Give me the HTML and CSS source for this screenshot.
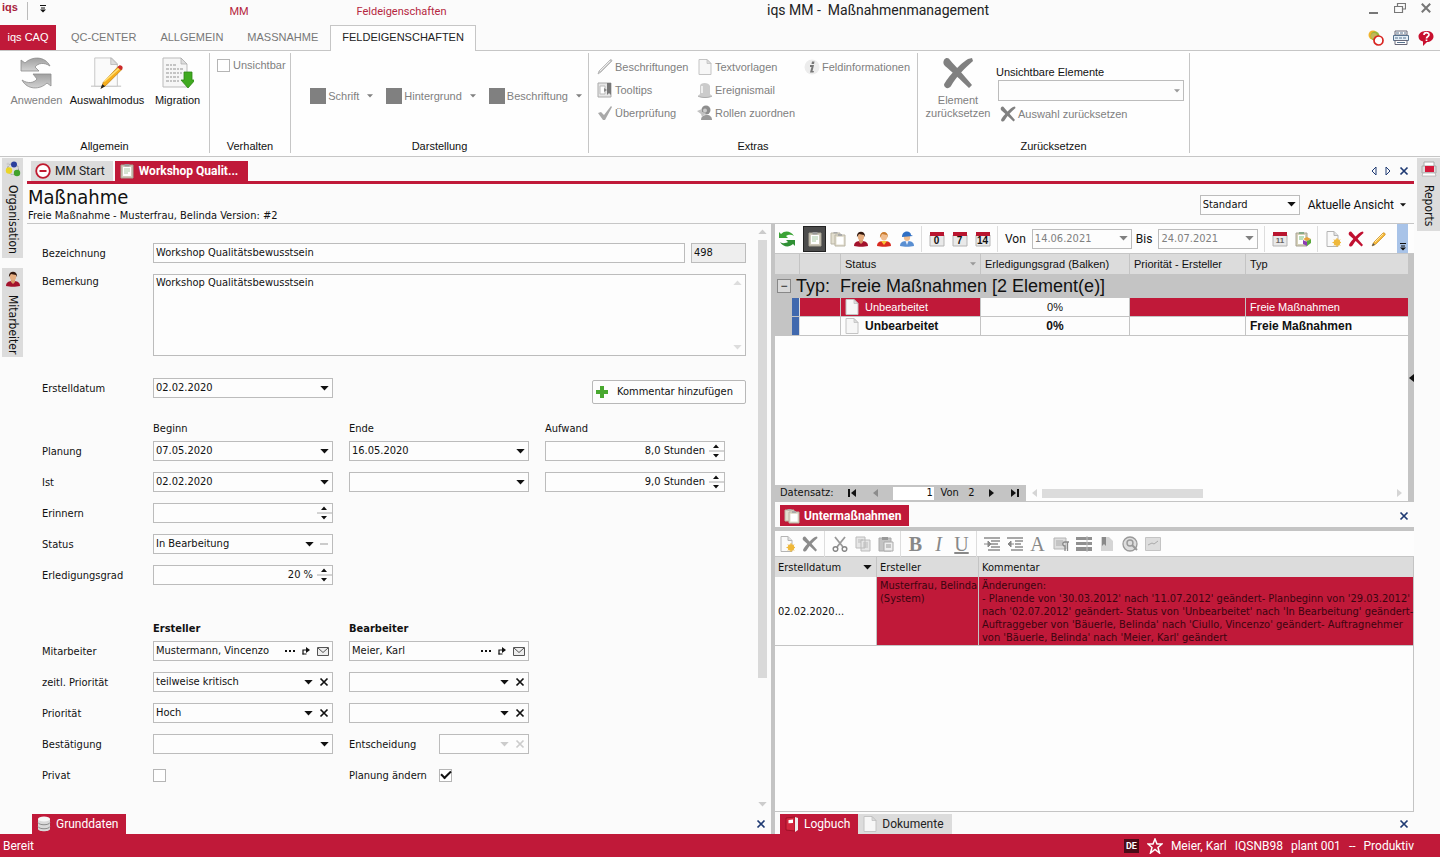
FILE: index.html
```html
<!DOCTYPE html>
<html lang="de">
<head>
<meta charset="utf-8">
<title>iqs MM - Maßnahmenmanagement</title>
<link rel="stylesheet" href="styles.css">
</head>
<body>
<svg class="defs" aria-hidden="true">
  <symbol id="caret" viewBox="0 0 10 6"><path d="M0 0h10L5 5.5z" fill="currentColor"/></symbol>
  <symbol id="caret-left" viewBox="0 0 6 10"><path d="M6 1v8L1 5z" fill="currentColor"/></symbol>
  <symbol id="caret-right" viewBox="0 0 6 10"><path d="M0 1v8l5-4z" fill="currentColor"/></symbol>
  <symbol id="first" viewBox="0 0 9 8"><path d="M0 0h2v8H0zM8 0v8L3 4z" fill="currentColor"/></symbol>
  <symbol id="last" viewBox="0 0 9 8"><path d="M7 0h2v8H7zM1 0v8l5-4z" fill="currentColor"/></symbol>
  <symbol id="more" viewBox="0 0 8 10"><path d="M1 2.500h6M2 5h4" stroke="currentColor"/><path d="M1 6.500h6L4 9.500z" fill="currentColor"/></symbol>
  <symbol id="x" viewBox="0 0 10 10"><path d="M1.500 1.500l7 7M8.500 1.500l-7 7" stroke="currentColor" stroke-width="1.700"/></symbol>
  <symbol id="spin" viewBox="0 0 16 18"><path d="M5 6h6L8 2.500zM5 12h6l-3 3.500z" fill="#111"/><path d="M1 9h15" stroke="#aaa"/></symbol>
  <symbol id="go" viewBox="0 0 10 10"><path d="M2 8.500V4h4" fill="none" stroke="#111" stroke-width="1.200"/><path d="M5 1l4 3-4 3z" fill="#111"/><path d="M1.500 8h4" stroke="#111"/></symbol>
  <symbol id="mail" viewBox="0 0 12 10"><path d="M.5 1.500h11v8H.5z" fill="#eee" stroke="#555"/><path d="M1 2l5 4.500L11 2" fill="none" stroke="#555"/></symbol>
  <symbol id="bigx" viewBox="0 0 32 32"><path d="M2 3c2-3 5-2 6 0 6 7 13 14 22 25l-3 3C19 23 9 14 3 9 1 7 1 5 2 3z" fill="currentColor"/><path d="M30 1l1 3C22 12 14 20 9 29c-2 3-6 3-7-1C3 24 16 8 26 2z" fill="currentColor"/></symbol>
  <symbol id="cycle" viewBox="0 0 32 32"><defs><linearGradient id="cg" x2="0" y2="1"><stop stop-color="#a0a0a0"/><stop offset="1" stop-color="#d2d2d2"/></linearGradient></defs><path d="M1 3l4 3C12-1 25-1 30 9c-6-4-12-3-15 1l4 4H1z" fill="url(#cg)" stroke="#8d8d8d" stroke-width=".8"/><path d="M31 29l-4-3C20 33 7 33 2 23c6 4 12 3 15-1l-4-5h18z" fill="url(#cg)" stroke="#8d8d8d" stroke-width=".8"/></symbol>
  <symbol id="doc" viewBox="0 0 14 16"><path d="M1 .5h8l4 4v11H1z" fill="#f7f7f7" stroke="#c4c4c4"/><path d="M9 .5v4h4z" fill="#ddd" stroke="#bcbcbc" stroke-width=".7"/></symbol>
  <symbol id="edit-doc" viewBox="0 0 34 34"><path d="M0 31h32" stroke="#bbb"/><path d="M4 1h18l6 6v24H4z" fill="#fafafa" stroke="#c4c4c4"/><path d="M21 1v7h7z" fill="#ddd" stroke="#aaa" stroke-width=".7"/><path d="M11 33l2-6L29 10l4 3-17 17z" fill="#f7ae1c" stroke="#b97909" stroke-width=".7"/><path d="M14 26l17-15" stroke="#ffe078" stroke-width="1.500"/><path d="M28 11l2-2c2-1 5 2 3 4l-1 1z" fill="#cc2a2a"/><path d="M10 34l2-5 3 2z" fill="#222"/></symbol>
  <symbol id="migrate" viewBox="0 0 32 32"><path d="M1 1h18l6 6v23H1z" fill="#f6f6f6" stroke="#bbb"/><path d="M19 1v6h6z" fill="#ddd" stroke="#aaa" stroke-width=".7"/><path d="M4 8h11M4 12h18M4 16h16M4 20h14M4 24h14" stroke="#b4b4b4" stroke-width="1.500" stroke-dasharray="3 1 2 1"/><path d="M22 15h8v8h3l-7 8-7-8h3z" fill="#3faa20" stroke="#2d8515" stroke-width=".8"/></symbol>
  <symbol id="pencil" viewBox="0 0 16 16"><path d="M1 15l2-4L12 2c1-1 3 1 2 2l-9 9z" fill="#f6b93a" stroke="#c98c1e" stroke-width=".7"/><path d="M4 11l8-8" stroke="#ffe9a5"/><path d="M1 15l1-3 2 2z" fill="#555"/></symbol>
  <symbol id="pencil-g" viewBox="0 0 16 16"><path d="M1 15l1-3L13 1c1-1 2 0 2 1L4 13z" fill="#c6c6c6" stroke="#aaa" stroke-width=".7"/><path d="M3 12L13 2" stroke="#eee"/></symbol>
  <symbol id="tip" viewBox="0 0 16 16"><path d="M1 1h13v14H1z" fill="#e6e6e6" stroke="#aaa"/><path d="M3 4h5v8H3z" fill="#fff" stroke="#bbb"/><path d="M10 1h4v12l-2-2-2 2z" fill="#777"/><path d="M7 6l3 2-3 2z" fill="#888"/></symbol>
  <symbol id="check-g" viewBox="0 0 16 16"><path d="M1 8l3-1 3 3 7-9 1 1-7 13H6z" fill="#a9a9a9"/></symbol>
  <symbol id="bell" viewBox="0 0 16 16"><path d="M3 12V4c0-4 9-4 10 0v8l2 2c-3 2-11 2-14 0z" fill="#cbcbcb"/><path d="M5 4v7" stroke="#eee" stroke-width="2"/><path d="M1 14c3 2 11 2 14 0" fill="none" stroke="#aaa"/></symbol>
  <symbol id="role" viewBox="0 0 16 16"><circle cx="9" cy="5" r="4.500" fill="#8d8d8d"/><path d="M4 15c0-4 3-5 6-5s5 2 5 5z" fill="#999"/><path d="M0 6l5-2v3l4 1-4 4-1-3z" fill="#c2c2c2"/><circle cx="8" cy="5.500" r="2" fill="#ccc"/></symbol>
  <symbol id="info" viewBox="0 0 16 16"><circle cx="8" cy="8" r="7.500" fill="#ececec"/><path d="M8 2.500h2.500L10 5H7.500zM6 6h4l-1.500 6H10l-.5 1.500H6L7.500 8H6z" fill="#777"/></symbol>
  <symbol id="circles" viewBox="0 0 16 16"><circle cx="5" cy="5" r="4.500" fill="#f0b32c"/><circle cx="7" cy="6" r="4.500" fill="#97b73c"/><circle cx="6" cy="6" r="3" fill="#c5b65a"/><circle cx="10.500" cy="10.500" r="4.500" fill="#fff" stroke="#d8231f" stroke-width="1.700"/></symbol>
  <symbol id="printer" viewBox="0 0 16 16"><path d="M2 1h12v4H2z" fill="#fff" stroke="#667"/><path d="M.5 5.500h15v5H.5z" fill="#e4eef6" stroke="#56728f"/><path d="M3 3h10M2 8h12" stroke="#56728f" stroke-dasharray="3 1"/><path d="M2 10.500h12v4H2z" fill="#fff" stroke="#667"/><path d="M4 12.500h8" stroke="#56728f"/></symbol>
  <symbol id="help" viewBox="0 0 16 16"><path d="M8 1c5 0 7.500 2 7.500 5.500S12 12 9 12l-4 4 0-4.500C2 11 .5 9 .5 6.500S3 1 8 1z" fill="#c8102e"/><path d="M6 5c0-3 5-3 5-.3C11 6.500 8.500 6.500 8.500 8.500M8.500 9.500v1.500" fill="none" stroke="#fff" stroke-width="1.700"/></symbol>
  <symbol id="orga" viewBox="0 0 16 16"><circle cx="8" cy="8" r="5.500" fill="none" stroke="#999" stroke-dasharray="2 1"/><circle cx="9" cy="3.500" r="3" fill="#2b3f9d"/><circle cx="4" cy="9.500" r="3.200" fill="#ead526"/><circle cx="12" cy="12" r="3.200" fill="#41a12c"/><circle cx="3" cy="3" r="1.500" fill="#ccc"/></symbol>
  <symbol id="person" viewBox="0 0 16 16"><path d="M1 15c0-4 3-5 7-5s7 1 7 5c-4 1-10 1-14 0z" fill="#a3122c"/><path d="M6 8h4v3l-2 2-2-2z" fill="#d99a6a"/><ellipse cx="8" cy="5.500" rx="3.200" ry="4" fill="#e5ad80"/><path d="M4 6c-1-7 9-7 8 0l-1-2-5-1z" fill="#33190f"/></symbol>
  <symbol id="person2" viewBox="0 0 16 16"><path d="M1 15c0-4 3-5 7-5s7 1 7 5c-4 1-10 1-14 0z" fill="#d92a20"/><path d="M5 10h6l-3 4z" fill="#f5c339"/><ellipse cx="8" cy="5.500" rx="3.200" ry="4" fill="#f0bd8f"/><path d="M4 7c-1-8 9-8 8 0l-1-3-5-1z" fill="#c97b2d"/></symbol>
  <symbol id="person3" viewBox="0 0 16 16"><path d="M1 15c0-4 3-5 7-5s7 1 7 5c-4 1-10 1-14 0z" fill="#5a8fd2"/><path d="M6 9h4l-2 5z" fill="#e8eefa"/><ellipse cx="8" cy="6" rx="3.200" ry="4" fill="#f0bd8f"/><path d="M3 6C3-1 12-1 12 4l2 1z" fill="#2f6fc4"/></symbol>
  <symbol id="report" viewBox="0 0 16 16"><path d="M3 1h10v5H3z" fill="#fff" stroke="#aaa"/><path d="M1 5h14v7H1z" fill="#ddd" stroke="#aaa"/><path d="M4 5h9v6H4z" fill="#d4183a"/><path d="M2 12h12l1 3H1z" fill="#fff" stroke="#aaa" stroke-width=".7"/></symbol>
  <symbol id="mm" viewBox="0 0 16 16"><circle cx="8" cy="8" r="6.800" fill="#fff" stroke="#c01a2f" stroke-width="1.800"/><path d="M4.500 8h7" stroke="#c01a2f" stroke-width="2"/></symbol>
  <symbol id="clip" viewBox="0 0 14 16"><path d="M1 2h12v13H1z" fill="#cfcabb" stroke="#a8a394"/><path d="M3 4h8v9H3z" fill="#fff"/><path d="M4.500 1h5v2.500h-5z" fill="#999"/><path d="M4 6h6M4 8h6M4 10h4" stroke="#a9c9a4"/></symbol>
  <symbol id="clips" viewBox="0 0 16 16"><path d="M1 2h9v11H1z" fill="#e2decf" stroke="#bab5a4"/><path d="M5 4h10v11H5z" fill="#e2decf" stroke="#bab5a4"/><path d="M6.500 6h7v7.500h-7z" fill="#fff"/><path d="M3.500 1h4v1.500h-4zM8 3h4v2H8z" fill="#aaa"/></symbol>
  <symbol id="clip-c" viewBox="0 0 16 16"><path d="M1 2h11v13H1z" fill="#d6d1b8" stroke="#a8a394"/><path d="M3 4h7v9H3z" fill="#fff"/><path d="M4 1h5v2H4z" fill="#8a8"/><path d="M4 6h5M4 8h4" stroke="#7b7"/><path d="M8 8l4-2 4 2-4 2z" fill="#e8a23a"/><path d="M8 9l4 2v4l-4-2z" fill="#8c3bb4"/><path d="M12 10l4-2v4l-4 3z" fill="#5aa83c"/></symbol>
  <symbol id="refresh" viewBox="0 0 16 16"><path d="M0 1l2 2c4-4 10-3 13 2-3-2-6-1-8 0l2 2H0z" fill="#3ba336"/><path d="M16 15l-2-2C10 17 4 16 1 11c3 2 6 1 8 0L7 9h9z" fill="#2f8f34"/></symbol>
  <symbol id="cal" viewBox="0 0 16 16"><path d="M1 4h14v11H1z" fill="#e9e9e9" stroke="#b5b5b5"/><path d="M1 1h14v4H1z" fill="#b9152f"/></symbol>
  <symbol id="newdoc" viewBox="0 0 16 16"><path d="M2 .5h7l4 4v11H2z" fill="#fafafa" stroke="#b4b4b4"/><path d="M9 .5v4h4" fill="#e2e2e2" stroke="#b4b4b4"/><circle cx="12" cy="11.500" r="3.300" fill="#efb83a"/><path d="M12 7v9M7.500 11.500h9M9 8.500l6 6M15 8.500l-6 6" stroke="#efb83a"/></symbol>
  <symbol id="cut" viewBox="0 0 16 16"><path d="M3 1l8 10M13 1L5 11" stroke="#999" stroke-width="1.800"/><circle cx="3.500" cy="13" r="2.300" fill="none" stroke="#888" stroke-width="1.500"/><circle cx="12.500" cy="13" r="2.300" fill="none" stroke="#888" stroke-width="1.500"/></symbol>
  <symbol id="copy" viewBox="0 0 16 16"><path d="M1 1h9v11H1zM6 4h9v11H6z" fill="#e6e6e6" stroke="#bbb"/><path d="M3 4h5M3 6h3M8 7h5M8 9h5M8 11h5" stroke="#bbb"/></symbol>
  <symbol id="paste" viewBox="0 0 16 16"><path d="M1 2h12v13H1z" fill="#c4c4c4" stroke="#aaa"/><path d="M4 1h6v3H4z" fill="#999"/><path d="M6 6h9v9H6z" fill="#eee" stroke="#aaa"/><path d="M8 9h5M8 11h5" stroke="#999"/></symbol>
  <symbol id="indent" viewBox="0 0 16 16"><path d="M0 2h16M7 5h9M7 8h7M7 11h9M4 14h12" stroke="#8c8c8c" stroke-width="1.500"/><path d="M0 8h5M4 5l3 3-3 3z" stroke="#888" fill="#888"/></symbol>
  <symbol id="outdent" viewBox="0 0 16 16"><path d="M0 2h16M8 5h8M8 8h6M8 11h8M4 14h12" stroke="#8c8c8c" stroke-width="1.500"/><path d="M7 8H3M4 5L1 8l3 3z" stroke="#888" fill="#888"/></symbol>
  <symbol id="para" viewBox="0 0 16 16"><path d="M1 2h12v11H1z" fill="#ddd" stroke="#b5b5b5"/><path d="M3 5h7M3 7h6M3 9h6" stroke="#aaa"/><path d="M16 6h-4c-3 0-3 4 0 4v5M14.500 6v9" stroke="#888" stroke-width="1.300" fill="none"/></symbol>
  <symbol id="lines" viewBox="0 0 16 16"><path d="M0 1h16v3H0zM0 6h16v3H0zM0 11h16v4H0z" fill="#909090"/><path d="M11 0v16" stroke="#bbb"/></symbol>
  <symbol id="bookm" viewBox="0 0 16 16"><path d="M2 1h8l4 4v10H2z" fill="#d5d5d5"/><path d="M3 1h4v9l-2-2-2 2z" fill="#8a8a8a"/></symbol>
  <symbol id="find" viewBox="0 0 16 16"><circle cx="8" cy="8" r="7" fill="#ddd" stroke="#999" stroke-width="1.300"/><circle cx="8" cy="7" r="3" fill="none" stroke="#999" stroke-width="1.400"/><path d="M10 9l5 5" stroke="#999" stroke-width="2"/></symbol>
  <symbol id="picture" viewBox="0 0 16 16"><path d="M.5 1.500h15v13H.5z" fill="#ddd" stroke="#c4c4c4"/><path d="M3 9l4-2 2 1 4-3" stroke="#aaa" fill="none"/></symbol>
  <symbol id="db" viewBox="0 0 14 16"><path d="M1 3v10c0 3 12 3 12 0V3z" fill="#d9d9d9"/><ellipse cx="7" cy="3" rx="6" ry="2.500" fill="#f6f6f6"/><path d="M1 6.500c1 3 11 3 12 0M1 10.500c1 3 11 3 12 0" fill="none" stroke="#8d8d8d"/></symbol>
  <symbol id="book" viewBox="0 0 14 16"><path d="M1 2l9-1v14l-9-1z" fill="#d3263f" stroke="#8c0a1d" stroke-width=".7"/><path d="M10 1l3 1v12l-3 2z" fill="#eee"/><path d="M3.500 4L8 3.500V7l-4.500.3z" fill="#fff"/></symbol>
  <symbol id="star" viewBox="0 0 16 16"><path d="M8 1l2 5h5l-4 3.500 1.500 5.500L8 11.500 3.500 15 5 9.500 1 6h5z" fill="none" stroke="#fff" stroke-width="1.500"/></symbol>
  <symbol id="plus" viewBox="0 0 12 12"><path d="M4 0h4v4h4v4H8v4H4V8H0V4h4z" fill="#48a82f"/></symbol>
  <symbol id="tri-l" viewBox="0 0 6 10"><path d="M5 1v8L1 5z" fill="none" stroke="#1f3a73"/></symbol>
  <symbol id="tri-r" viewBox="0 0 6 10"><path d="M1 1v8l4-4z" fill="none" stroke="#1f3a73"/></symbol>
  <symbol id="min" viewBox="0 0 12 12"><path d="M1 11h9" stroke="#777" stroke-width="2"/></symbol>
  <symbol id="restore" viewBox="0 0 12 12"><path d="M3.500 4V1.500h8V7H9M.5 4.500h8v6h-8z" fill="none" stroke="#777" stroke-width="1.200"/></symbol>
</svg>

<header class="titlebar">
  <b class="brand">iqs</b>
  <span class="brand-sep"></span>
  <button class="bare qat" aria-label="Schnellzugriff"><svg class="s8"><use href="#more"/></svg></button>
  <span class="context context-mm">MM</span>
  <span class="context context-field">Feldeigenschaften</span>
  <h1 class="app-title">iqs MM -&nbsp; Maßnahmenmanagement</h1>
  <div class="window-buttons">
    <button class="bare" aria-label="Minimieren"><svg class="s12"><use href="#min"/></svg></button>
    <button class="bare" aria-label="Verkleinern"><svg class="s12"><use href="#restore"/></svg></button>
    <button class="bare" aria-label="Schließen"><svg class="s12"><use href="#x"/></svg></button>
  </div>
</header>

<nav class="ribbon-tabs">
  <button class="file-tab">iqs CAQ</button>
  <a href="#" class="rtab">QC-CENTER</a>
  <a href="#" class="rtab">ALLGEMEIN</a>
  <a href="#" class="rtab">MASSNAHME</a>
  <a href="#" class="rtab active">FELDEIGENSCHAFTEN</a>
  <div class="quick">
    <button class="bare" aria-label="Status"><svg class="s16"><use href="#circles"/></svg></button>
    <button class="bare" aria-label="Drucken"><svg class="s16"><use href="#printer"/></svg></button>
    <button class="bare" aria-label="Hilfe"><svg class="s16"><use href="#help"/></svg></button>
  </div>
</nav>

<section class="ribbon">
  <div class="rgroup g-general">
    <div class="rbody big-row">
      <button class="big off w56"><svg class="s32"><use href="#cycle"/></svg>Anwenden</button>
      <button class="big w84"><svg class="s32"><use href="#edit-doc"/></svg>Auswahlmodus</button>
      <button class="big w56"><svg class="s32"><use href="#migrate"/></svg>Migration</button>
    </div>
    <div class="rlabel">Allgemein</div>
  </div>
  <div class="rgroup g-behave">
    <div class="rbody"><label class="check off"><input type="checkbox" disabled>Unsichtbar</label></div>
    <div class="rlabel">Verhalten</div>
  </div>
  <div class="rgroup g-display">
    <div class="rbody color-row">
      <button class="small off"><span class="swatch"></span>Schrift<svg class="mini-caret"><use href="#caret"/></svg></button>
      <button class="small off"><span class="swatch"></span>Hintergrund<svg class="mini-caret"><use href="#caret"/></svg></button>
      <button class="small off"><span class="swatch"></span>Beschriftung<svg class="mini-caret"><use href="#caret"/></svg></button>
    </div>
    <div class="rlabel">Darstellung</div>
  </div>
  <div class="rgroup g-extras">
    <div class="rbody extras">
      <button class="small off"><svg class="s16"><use href="#pencil-g"/></svg>Beschriftungen</button>
      <button class="small off"><svg class="s16"><use href="#doc"/></svg>Textvorlagen</button>
      <button class="small off"><svg class="s16"><use href="#info"/></svg>Feldinformationen</button>
      <button class="small off"><svg class="s16"><use href="#tip"/></svg>Tooltips</button>
      <button class="small off span2"><svg class="s16"><use href="#bell"/></svg>Ereignismail</button>
      <button class="small off"><svg class="s16"><use href="#check-g"/></svg>Überprüfung</button>
      <button class="small off span2"><svg class="s16"><use href="#role"/></svg>Rollen zuordnen</button>
    </div>
    <div class="rlabel">Extras</div>
  </div>
  <div class="rgroup g-reset">
    <div class="rbody reset">
      <button class="big off w72"><svg class="s32"><use href="#bigx"/></svg>Element<br>zurücksetzen</button>
      <div class="reset-side">
        <label for="hidden-el">Unsichtbare Elemente</label>
        <div class="combo ribbon-combo"><select id="hidden-el" disabled><option></option></select><svg class="mini-caret"><use href="#caret"/></svg></div>
        <button class="small off reset-sel"><svg class="s16"><use href="#bigx"/></svg>Auswahl zurücksetzen</button>
      </div>
    </div>
    <div class="rlabel">Zurücksetzen</div>
  </div>
</section>

<main class="workspace">
  <aside class="side left">
    <button class="side-tab side-orga"><svg class="s16"><use href="#orga"/></svg>Organisation</button>
    <button class="side-tab side-staff"><svg class="s16"><use href="#person"/></svg>Mitarbeiter</button>
  </aside>

  <div class="center">
    <div class="doc-tabs">
      <button class="dtab"><svg class="s16"><use href="#mm"/></svg>MM Start</button>
      <button class="dtab on strong wide"><svg class="s16"><use href="#clip"/></svg>Workshop Qualit...</button>
      <div class="tab-nav">
        <button class="bare" aria-label="Zurück"><svg class="tri"><use href="#tri-l"/></svg></button>
        <button class="bare" aria-label="Weiter"><svg class="tri"><use href="#tri-r"/></svg></button>
        <button class="bare navy" aria-label="Schließen"><svg class="s10"><use href="#x"/></svg></button>
      </div>
    </div>
    <div class="page-head">
      <div>
        <h2>Maßnahme</h2>
        <p>Freie Maßnahme - Musterfrau, Belinda Version: #2</p>
      </div>
      <div class="view-tools">
        <div class="combo view-combo"><select aria-label="Ansicht"><option>Standard</option></select><svg class="caret"><use href="#caret"/></svg></div>
        <button class="view-btn">Aktuelle Ansicht<svg class="mini-caret"><use href="#caret"/></svg></button>
      </div>
    </div>

    <div class="split">
      <section class="form-pane">
        <div class="form-scroll">
          <form class="form">
            <div class="fgrid">
              <label for="f-name">Bezeichnung</label>
              <div class="name-row">
                <div class="field grow"><input id="f-name" value="Workshop Qualitätsbewusstsein"></div>
                <div class="field num"><input aria-label="Nummer" value="498" readonly></div>
              </div>
              <label for="f-note" class="top-label">Bemerkung</label>
              <div class="field note"><textarea id="f-note">Workshop Qualitätsbewusstsein</textarea><span class="note-bar"><svg class="caret up"><use href="#caret"/></svg><svg class="caret"><use href="#caret"/></svg></span></div>
            </div>

            <div class="fgrid created">
              <label for="f-created">Erstelldatum</label>
              <div class="field"><input id="f-created" value="02.02.2020"><svg class="caret"><use href="#caret"/></svg></div>
              <button type="button" class="comment-btn"><svg class="s12"><use href="#plus"/></svg>Kommentar hinzufügen</button>
            </div>

            <div class="fgrid plan">
              <span class="head c2">Beginn</span><span class="head">Ende</span><span class="head">Aufwand</span>
              <label for="f-p1">Planung</label>
              <div class="field"><input id="f-p1" value="07.05.2020"><svg class="caret"><use href="#caret"/></svg></div>
              <div class="field"><input aria-label="Planung Ende" value="16.05.2020"><svg class="caret"><use href="#caret"/></svg></div>
              <div class="field right"><input aria-label="Planung Aufwand" value="8,0 Stunden"><svg class="spin"><use href="#spin"/></svg></div>
              <label for="f-i1">Ist</label>
              <div class="field"><input id="f-i1" value="02.02.2020"><svg class="caret"><use href="#caret"/></svg></div>
              <div class="field"><input aria-label="Ist Ende"><svg class="caret"><use href="#caret"/></svg></div>
              <div class="field right"><input aria-label="Ist Aufwand" value="9,0 Stunden"><svg class="spin"><use href="#spin"/></svg></div>
              <label class="c1" for="f-rem">Erinnern</label>
              <div class="field right"><input id="f-rem"><svg class="spin"><use href="#spin"/></svg></div>
              <label class="c1" for="f-stat">Status</label>
              <div class="field"><select id="f-stat"><option>In Bearbeitung</option></select><svg class="caret"><use href="#caret"/></svg><span class="dash"></span></div>
              <label class="c1" for="f-done">Erledigungsgrad</label>
              <div class="field right"><input id="f-done" value="20 %"><svg class="spin"><use href="#spin"/></svg></div>
            </div>

            <div class="fgrid people">
              <b class="head c2">Ersteller</b><b class="head">Bearbeiter</b>
              <label class="c1" for="f-m1">Mitarbeiter</label>
              <div class="field"><input id="f-m1" value="Mustermann, Vincenzo"><button type="button" class="dots" aria-label="Auswählen"><i></i><i></i><i></i></button><svg class="s10"><use href="#go"/></svg><svg class="mail"><use href="#mail"/></svg></div>
              <div class="field"><input aria-label="Bearbeiter" value="Meier, Karl"><button type="button" class="dots" aria-label="Auswählen"><i></i><i></i><i></i></button><svg class="s10"><use href="#go"/></svg><svg class="mail"><use href="#mail"/></svg></div>
              <label class="c1" for="f-z1">zeitl. Priorität</label>
              <div class="field"><select id="f-z1"><option>teilweise kritisch</option></select><svg class="caret"><use href="#caret"/></svg><svg class="s10"><use href="#x"/></svg></div>
              <div class="field"><select aria-label="zeitl. Priorität Bearbeiter"><option></option></select><svg class="caret"><use href="#caret"/></svg><svg class="s10"><use href="#x"/></svg></div>
              <label class="c1" for="f-q1">Priorität</label>
              <div class="field"><select id="f-q1"><option>Hoch</option></select><svg class="caret"><use href="#caret"/></svg><svg class="s10"><use href="#x"/></svg></div>
              <div class="field"><select aria-label="Priorität Bearbeiter"><option></option></select><svg class="caret"><use href="#caret"/></svg><svg class="s10"><use href="#x"/></svg></div>
              <label class="c1" for="f-b">Bestätigung</label>
              <div class="field"><select id="f-b"><option></option></select><svg class="caret"><use href="#caret"/></svg></div>
              <div class="pair"><label for="f-e">Entscheidung</label><div class="field faded"><select id="f-e" disabled><option></option></select><svg class="caret"><use href="#caret"/></svg><svg class="s10"><use href="#x"/></svg></div></div>
              <label class="c1" for="f-priv">Privat</label>
              <div class="tick"><input id="f-priv" type="checkbox"></div>
              <div class="pair"><label for="f-chg">Planung ändern</label><div class="tick"><input id="f-chg" type="checkbox" checked></div></div>
            </div>
          </form>
          <div class="vscroll"><svg class="caret up"><use href="#caret"/></svg><span class="vthumb"></span><svg class="caret"><use href="#caret"/></svg></div>
        </div>
        <div class="bottom-tabs">
          <button class="dtab on"><svg class="s16"><use href="#db"/></svg>Grunddaten</button>
          <button class="bare navy close" aria-label="Schließen"><svg class="s10"><use href="#x"/></svg></button>
        </div>
      </section>

      <section class="right-pane">
        <div class="list-pane">
          <div class="toolbar list-tools">
            <button class="bare t" aria-label="Aktualisieren"><svg class="s16"><use href="#refresh"/></svg></button>
            <button class="bare t pressed" aria-label="Einzeln"><svg class="s16"><use href="#clip"/></svg></button>
            <button class="bare t" aria-label="Alle"><svg class="s16"><use href="#clips"/></svg></button>
            <button class="bare t" aria-label="Eigene"><svg class="s16"><use href="#person"/></svg></button>
            <button class="bare t" aria-label="Vertreter"><svg class="s16"><use href="#person2"/></svg></button>
            <button class="bare t" aria-label="Extern"><svg class="s16"><use href="#person3"/></svg></button>
            <span class="tsep"></span>
            <button class="bare t cal"><svg class="s16"><use href="#cal"/></svg><b>0</b></button>
            <button class="bare t cal"><svg class="s16"><use href="#cal"/></svg><b>7</b></button>
            <button class="bare t cal"><svg class="s16"><use href="#cal"/></svg><b>14</b></button>
            <span class="tsep"></span>
            <label for="d-von">Von</label>
            <div class="field date"><input id="d-von" value="14.06.2021" disabled><svg class="caret"><use href="#caret"/></svg></div>
            <label for="d-bis">Bis</label>
            <div class="field date"><input id="d-bis" value="24.07.2021" disabled><svg class="caret"><use href="#caret"/></svg></div>
            <span class="tsep"></span>
            <button class="bare t cal tiny"><svg class="s16"><use href="#cal"/></svg><b>11</b></button>
            <button class="bare t" aria-label="Zuordnen"><svg class="s16"><use href="#clip-c"/></svg></button>
            <span class="tsep"></span>
            <button class="bare t" aria-label="Neu"><svg class="s16"><use href="#newdoc"/></svg></button>
            <button class="bare t crimson" aria-label="Löschen"><svg class="s16"><use href="#bigx"/></svg></button>
            <button class="bare t" aria-label="Bearbeiten"><svg class="s16"><use href="#pencil"/></svg></button>
            <button class="bare overflow" aria-label="Mehr"><svg class="s8"><use href="#more"/></svg></button>
          </div>
          <div class="list-body">
            <div class="list-main">
              <table class="list">
                <colgroup><col class="k1"><col class="k2"><col class="k3"><col class="k4"><col class="k5"><col class="k6"><col></colgroup>
                <thead><tr><th colspan="2"></th><th></th><th><span class="th-sort">Status<svg class="mini-caret"><use href="#caret"/></svg></span></th><th>Erledigungsgrad (Balken)</th><th>Priorität - Ersteller</th><th>Typ</th></tr></thead>
                <tbody>
                  <tr class="grp"><td colspan="7"><div><button class="toggle" aria-label="Einklappen">−</button>Typ:&nbsp; Freie Maßnahmen [2 Element(e)]</div></td></tr>
                  <tr class="sel"><td class="gut"></td><td class="blue"></td><td></td><td class="st"><div><svg class="s16"><use href="#doc"/></svg>Unbearbeitet</div></td><td class="mid">0%</td><td></td><td>Freie Maßnahmen</td></tr>
                  <tr class="bold"><td class="gut"></td><td class="blue"></td><td></td><td class="st"><div><svg class="s16"><use href="#doc"/></svg>Unbearbeitet</div></td><td class="mid">0%</td><td></td><td>Freie Maßnahmen</td></tr>
                </tbody>
              </table>
              <div class="pager">
                <div class="pager-nav">
                  <label for="rec">Datensatz:</label>
                  <button class="bare" aria-label="Erster"><svg class="nav"><use href="#first"/></svg></button>
                  <button class="bare grey" aria-label="Voriger"><svg class="tri"><use href="#caret-left"/></svg></button>
                  <input id="rec" value="1"><span>Von&nbsp;&nbsp; 2</span>
                  <button class="bare" aria-label="Nächster"><svg class="tri"><use href="#caret-right"/></svg></button>
                  <button class="bare" aria-label="Letzter"><svg class="nav"><use href="#last"/></svg></button>
                </div>
                <div class="hscroll"><svg class="tri"><use href="#caret-left"/></svg><span class="htrack"><span class="hthumb"></span></span><svg class="tri"><use href="#caret-right"/></svg></div>
              </div>
            </div>
            <div class="collapse"><svg class="tri"><use href="#caret-left"/></svg></div>
          </div>
        </div>

        <div class="sub-tabs">
          <button class="dtab on strong"><svg class="s16"><use href="#clips"/></svg>Untermaßnahmen</button>
          <button class="bare navy close" aria-label="Schließen"><svg class="s10"><use href="#x"/></svg></button>
        </div>

        <div class="log-pane">
          <div class="toolbar log-tools">
            <button class="bare t" aria-label="Neu"><svg class="s16"><use href="#newdoc"/></svg></button>
            <button class="bare t grey" aria-label="Löschen"><svg class="s16"><use href="#bigx"/></svg></button>
            <span class="tsep"></span>
            <button class="bare t" aria-label="Ausschneiden"><svg class="s16"><use href="#cut"/></svg></button>
            <button class="bare t" aria-label="Kopieren"><svg class="s16"><use href="#copy"/></svg></button>
            <button class="bare t" aria-label="Einfügen"><svg class="s16"><use href="#paste"/></svg></button>
            <span class="tsep"></span>
            <button class="bare t glyph"><b>B</b></button>
            <button class="bare t glyph"><em>I</em></button>
            <button class="bare t glyph"><u>U</u></button>
            <span class="tsep"></span>
            <button class="bare t" aria-label="Einzug größer"><svg class="s16"><use href="#indent"/></svg></button>
            <button class="bare t" aria-label="Einzug kleiner"><svg class="s16"><use href="#outdent"/></svg></button>
            <button class="bare t glyph">A</button>
            <button class="bare t" aria-label="Absatz"><svg class="s16"><use href="#para"/></svg></button>
            <button class="bare t" aria-label="Abstand"><svg class="s16"><use href="#lines"/></svg></button>
            <button class="bare t" aria-label="Lesezeichen"><svg class="s16"><use href="#bookm"/></svg></button>
            <button class="bare t" aria-label="Suchen"><svg class="s16"><use href="#find"/></svg></button>
            <button class="bare t" aria-label="Bild"><svg class="s16"><use href="#picture"/></svg></button>
          </div>
          <div class="log-body">
            <table class="log">
              <colgroup><col class="l1"><col class="l1"><col></colgroup>
              <thead><tr><th><span class="th-sort">Erstelldatum<svg class="caret"><use href="#caret"/></svg></span></th><th>Ersteller</th><th>Kommentar</th></tr></thead>
              <tbody><tr><td class="when">02.02.2020...</td><td class="red">Musterfrau, Belinda<br>(System)</td><td class="red">Änderungen:<br>- Planende von '30.03.2012' nach '11.07.2012' geändert- Planbeginn von '29.03.2012'<br>nach '02.07.2012' geändert- Status von 'Unbearbeitet' nach 'In Bearbeitung' geändert-<br>Auftraggeber von 'Bäuerle, Belinda' nach 'Ciullo, Vincenzo' geändert- Auftragnehmer<br>von 'Bäuerle, Belinda' nach 'Meier, Karl' geändert</td></tr></tbody>
            </table>
          </div>
        </div>
        <div class="bottom-tabs">
          <button class="dtab on"><svg class="s16"><use href="#book"/></svg>Logbuch</button>
          <button class="dtab"><svg class="s16"><use href="#doc"/></svg>Dokumente</button>
          <button class="bare navy close" aria-label="Schließen"><svg class="s10"><use href="#x"/></svg></button>
        </div>
      </section>
    </div>
  </div>

  <aside class="side">
    <button class="side-tab side-reports"><svg class="s16"><use href="#report"/></svg>Reports</button>
  </aside>
</main>

<footer class="statusbar">
  <span>Bereit</span>
  <div class="status-right"><b class="lang">DE</b><svg class="s16"><use href="#star"/></svg><span>Meier, Karl</span><span>IQSNB98</span><span>plant 001</span><span>--</span><span>Produktiv</span></div>
</footer>
</body>
</html>
```
FILE: styles.css
```css
:root {
  --red: #c01939;
  --line: #c6c6c6;
  --panel: #dcdcdc;
  --bar: #c4c4c4;
  --bg: #fbfbfb;
  --form: "DejaVu Sans Condensed", "Noto Sans", sans-serif;
  --ui: Roboto, "Noto Sans", sans-serif;
  --ribbon: "Liberation Sans", Arial, sans-serif;
}
* { box-sizing: border-box; }
body {
  margin: 0;
  min-height: 100vh;
  display: flex;
  flex-direction: column;
  background: var(--bg);
  color: #111;
  font: 11px/14px var(--form);
}
.defs { position: absolute; width: 0; height: 0; }
svg { display: block; flex: none; }
h1, h2, p { margin: 0; font-weight: 400; }
button, input, select, textarea { font: inherit; color: inherit; margin: 0; }
button { border: 0; background: none; padding: 0; white-space: nowrap; }
.bare { display: flex; align-items: center; justify-content: center; }
.s8 { width: 8px; height: 10px; }
.s10 { width: 10px; height: 10px; }
.s12 { width: 12px; height: 12px; }
.s16 { width: 16px; height: 16px; }
.s32 { width: 32px; height: 32px; }
.tri { width: 6px; height: 10px; }
.nav { width: 9px; height: 8px; }
.mail { width: 12px; height: 10px; }
.caret { width: 9px; height: 5px; }
.mini-caret { width: 6px; height: 4px; }
.up { transform: rotate(180deg); }
.spin { width: 16px; height: 18px; }
.navy { color: #1f3a73; }
.grey { color: #8c8c8c; }
.crimson { color: #c01030; }

/* title bar */
.titlebar { display: flex; height: 25px; align-items: flex-start; padding: 0 8px 0 2px; }
.brand { width: 25px; color: #a8213c; font: bold 11px/15px var(--ribbon); }
.brand-sep { width: 1px; height: 18px; margin-top: 2px; background: #bbb; }
.qat { width: 30px; height: 16px; }
.context { color: #b5273f; font: 11px/14px var(--ui); margin-top: 5px; text-align: center; white-space: nowrap; }
.context-mm { width: 90px; margin-left: 136px; }
.context-field { width: 145px; margin-left: 45px; }
.app-title { flex: 1; text-align: center; padding-right: 86px; font: 14px/20px var(--ui); color: #222; }
.window-buttons { display: flex; gap: 14px; margin-top: 2px; color: #777; }

/* ribbon tabs */
.ribbon-tabs { display: flex; height: 26px; padding-right: 6px; border-bottom: 1px solid var(--line); font: 11px/25px var(--ribbon); }
.file-tab { width: 56px; background: var(--red); color: #fff; height: 25px; }
.rtab { color: #777; text-decoration: none; padding: 0 12px; text-align: center; }
.rtab:first-of-type { padding-left: 15px; }
.rtab.active { color: #222; height: 26px; padding: 0 11px; background: #fefefe; border: 1px solid var(--line); border-bottom: 0; line-height: 23px; }
.quick { display: flex; gap: 9px; margin-left: auto; align-items: center; }

/* ribbon */
.ribbon { display: flex; height: 106px; padding-top: 2px; background: #fefefe; border-bottom: 1px solid var(--line); font: 11px/14px var(--ribbon); }
.rgroup { display: flex; flex-direction: column; height: 100px; border-right: 1px solid var(--line); }
.g-general { width: 210px; }
.g-behave { width: 81px; }
.g-display { width: 298px; }
.g-extras { width: 329px; }
.g-reset { width: 272px; }
.rbody { flex: 1; padding: 4px 4px 0; }
.rlabel { text-align: center; line-height: 14px; }
.off { color: #808080; }
.big { display: flex; flex-direction: column; align-items: center; line-height: 13px; gap: 5px; }
.rbody.big-row { display: flex; gap: 2px; align-items: flex-start; padding-left: 9px; }
.w56 { width: 56px; }
.w84 { width: 84px; }
.w72 { width: 72px; }
.check { display: flex; gap: 3px; align-items: center; padding: 1px 3px; }
.small { display: flex; align-items: center; gap: 2px; height: 16px; }
.small .mini-caret { margin-left: 6px; }
.swatch { width: 16px; height: 16px; background: #808080; }
.rbody.color-row { display: flex; justify-content: flex-end; align-items: center; gap: 13px; padding: 0 6px 0 0; }
.rbody.extras { display: grid; grid-template-columns: 92px 99px 1fr; gap: 7px 8px; align-content: start; padding: 6px 0 0 8px; }
.span2 { grid-column: span 2; }
.reset { display: flex; gap: 2px; }
.reset-side { display: flex; flex-direction: column; gap: 1px; padding-top: 8px; }
.ribbon-combo { width: 186px; height: 21px; margin: 0 0 4px 2px; color: #999; }
.reset-sel { margin-left: 4px; }

/* check boxes */
input[type="checkbox"] { appearance: none; width: 13px; height: 13px; background: #fff; border: 1px solid #b5b5b5; flex: none; display: grid; place-items: center; }
input[type="checkbox"]:checked::before { content: ""; width: 8px; height: 4px; border: solid #111; border-width: 0 0 2px 2px; transform: rotate(-45deg) translate(1px, -1px); }

/* combos and fields */
.combo, .field { display: flex; align-items: center; background: #fdfdfd; border: 1px solid #bcbcbc; padding-right: 3px; }
.combo select, .field input, .field select, .field textarea {
  appearance: none; border: 0; background: transparent; outline: 0; padding: 0 2px; flex: 1; min-width: 0; width: 100%; opacity: 1;
}
.field { height: 20px; gap: 6px; min-width: 0; }
.field.right { padding-right: 0; gap: 1px; }
.field.right input { text-align: right; }

/* workspace */
.workspace { flex: 1; display: flex; min-height: 0; }
.side { width: 23px; display: flex; flex-direction: column; gap: 10px; padding-top: 1px; margin-left: 3px; flex: none; }
.side.left { padding-left: 2px; margin: 0 4px 0 0; }
.side-tab { background: var(--panel); display: flex; align-items: center; gap: 8px; padding-top: 3px; writing-mode: vertical-rl; font-size: 12px; }
.side-orga { height: 100px; }
.side-staff { height: 89px; }
.side-reports { height: 73px; }
.center { flex: 1; min-width: 0; display: flex; flex-direction: column; }
.dtab { display: flex; align-items: center; gap: 4px; height: 20px; padding: 0 8px 0 4px; background: var(--panel); color: #222; font: 12px/20px var(--ui); }
.dtab.on { background: var(--red); color: #fff; }
.dtab.strong { font-weight: 700; }
.dtab.wide { padding-right: 10px; margin-left: 2px; }
.doc-tabs { display: flex; padding: 4px 5px 0 4px; border-bottom: 3px solid var(--red); }
.tab-nav { margin-left: auto; display: flex; align-items: center; gap: 8px; }
.page-head { display: flex; justify-content: space-between; height: 40px; padding: 2px 8px 0 1px; border-bottom: 1px solid var(--line); }
.page-head h2 { font: 20px/22px var(--form); }
.page-head p { line-height: 15px; }
.view-tools { display: flex; gap: 8px; align-items: center; }
.view-combo { width: 100px; height: 20px; }
.view-btn { display: flex; align-items: center; gap: 6px; font: 12px/16px var(--ui); }
.split { flex: 1; display: flex; min-height: 0; }
.form-pane { flex: 744 1 0; min-width: 0; display: flex; flex-direction: column; }
.right-pane { flex: 639 1 0; min-width: 0; display: flex; flex-direction: column; border-left: 4px solid var(--bar); }
.form-scroll { flex: 1; display: flex; }
.form { flex: 1; padding: 19px 10px 0 15px; }
.vscroll { width: 12px; margin-right: 3px; display: flex; flex-direction: column; align-items: center; padding: 5px 0; color: #ccc; }
.vthumb { width: 9px; height: 438px; margin: 6px 0 auto; background: #d9d9d9; }
.fgrid { display: grid; grid-template-columns: 111px minmax(0, 1fr); row-gap: 11px; }
.fgrid label { padding-top: 4px; }
.fgrid .top-label { padding-top: 1px; }
.name-row { display: flex; gap: 6px; }
.grow { flex: 1; }
.num { width: 55px; background: #eee; }
.field.note { height: 82px; align-items: stretch; }
.note textarea { resize: none; padding-top: 1px; }
.note-bar { display: flex; flex-direction: column; justify-content: space-between; padding: 5px 0; color: #ddd; }
.created { grid-template-columns: 111px 180px 1fr; margin-top: 22px; }
.comment-btn { justify-self: end; display: flex; align-items: center; gap: 9px; height: 24px; margin: 2px 0 -6px; padding: 0 12px 0 3px; border: 1px solid #b8b8b8; border-radius: 2px; background: #fdfdfd; }
.plan, .people { grid-template-columns: 95px 180px 180px 180px; column-gap: 16px; }
.plan { margin-top: 24px; }
.people { margin-top: 37px; }
.head { line-height: 14px; margin-bottom: -6px; }
.c2 { grid-column-start: 2; }
.c1 { grid-column-start: 1; }
.dash { width: 8px; height: 2px; margin-right: 1px; background: #ccc; }
.dots { display: flex; gap: 2px; }
.dots i { width: 2px; height: 2px; background: #111; }
.pair { display: flex; }
.pair label { width: 90px; flex: none; }
.pair .field { flex: 1; }
.faded { color: #ccc; }
.tick { display: flex; height: 20px; align-items: center; }

/* tab strips inside panes */
.bottom-tabs { display: flex; padding: 2px 5px 0; }
.bottom-tabs .close, .sub-tabs .close { margin-left: auto; }
.sub-tabs { display: flex; padding: 3px 5px 1px; }
.sub-tabs .dtab { height: 21px; }

/* toolbars */
.toolbar { display: flex; align-items: center; border-bottom: 1px solid var(--line); font: 12px/16px var(--ui); background: #fdfdfd; }
.list-tools { height: 30px; }
.log-tools { height: 26px; }
.t { width: 23px; height: 26px; flex: none; }
.pressed { background: #4c4c4c; border: 1px solid #222; margin: 0 0 0 5px; }
.tsep { width: 1px; height: 26px; margin: 0 3px; background: #ddd; }
.cal { position: relative; }
.cal b { position: absolute; top: 9px; left: 0; right: 0; text-align: center; font: bold 10px/11px var(--ribbon); color: #111; }
.cal.tiny b { font-size: 8px; color: #666; }
.toolbar label { margin: 0 6px 0 4px; }
.date { width: 100px; color: #808080; font: 11px/14px var(--form); }
.date + .tsep { margin-left: 6px; }
.overflow { width: 11px; height: 29px; margin-left: auto; margin-right: 6px; background: #a8c3e8; padding-top: 14px; }
.glyph { font: 20px/22px "Liberation Serif", serif; color: #888; }

/* record list */
.list-pane { flex: 280 1 0; display: flex; flex-direction: column; border-bottom: 1px solid var(--bar); }
.list-body { flex: 1; display: flex; }
.list-main { flex: 1; min-width: 0; display: flex; flex-direction: column; justify-content: space-between; background: #fdfdfd; }
.collapse { width: 6px; background: var(--bar); display: flex; align-items: center; }
table { border-collapse: separate; border-spacing: 0; table-layout: fixed; width: 100%; }
th { background: var(--panel); font-weight: 400; text-align: left; border-right: 1px solid #c4c4c4; padding: 0 4px; height: 20px; }
th:last-child { border-right: 0; }
.th-sort { display: flex; justify-content: space-between; align-items: center; }
.list { font: 11px/14px var(--ribbon); }
.list .mini-caret { color: #999; }
.k1 { width: 17px; } .k2 { width: 8px; } .k3 { width: 41px; } .k4 { width: 140px; } .k5 { width: 149px; } .k6 { width: 116px; }
.list td { height: 19px; padding: 0 4px; border-right: 1px solid var(--bar); border-bottom: 1px solid var(--bar); white-space: nowrap; overflow: hidden; }
.list td:last-child { border-right: 0; }
.list .grp td { background: var(--bar); height: 24px; font-size: 18px; padding: 0 2px; border: 0; }
.grp div { display: flex; align-items: center; gap: 5px; }
.toggle { width: 14px; height: 14px; border: 1px solid #888; background: #d8d8d8; font: 12px/10px var(--ribbon); }
.list td.gut { background: var(--bar); border: 0; }
.list td.blue { background: #4169ae; border-right-color: #ddd; }
.sel td { background: var(--red); color: #fff; }
.sel td.mid { background: #fdfdfd; color: #111; }
.list td.mid { text-align: center; }
.st div { display: flex; align-items: center; gap: 5px; }
.list td.st { padding-left: 3px; }
.bold { font-weight: 700; font-size: 12px; }
.pager { display: flex; height: 16px; }
.pager-nav { width: 251px; background: var(--bar); display: flex; align-items: center; justify-content: space-between; padding: 0 7px 0 5px; font-size: 11px; }
.pager-nav input { width: 41px; height: 13px; border: 0; padding: 0 1px; text-align: right; background: #fff; margin-right: -8px; }
.hscroll { flex: 1; display: flex; align-items: center; gap: 5px; padding: 0 5px; color: #d5d5d5; }
.htrack { flex: 1; }
.hthumb { display: block; width: 46%; height: 9px; background: #dcdcdc; }

/* log */
.log-pane { flex: 284 1 0; display: flex; flex-direction: column; border-top: 4px solid var(--bar); }
.log-body { flex: 1; border-right: 1px solid var(--bar); border-bottom: 1px solid var(--bar); background: #fdfdfd; }
.log-body table { font: 11px/13px var(--form); }
.l1 { width: 102px; }
.log th { padding: 0 4px 0 3px; }
.log td { vertical-align: top; padding: 2px 0 1px 3px; border-right: 1px solid var(--bar); border-bottom: 1px solid var(--bar); white-space: nowrap; }
.log td:last-child { border-right: 0; }
.log td.when { vertical-align: middle; }
.red { background: var(--red); color: #3b0510; }

/* status bar */
.statusbar { height: 23px; background: var(--red); color: #fff; display: flex; justify-content: space-between; align-items: center; padding: 0 26px 0 3px; font: 12px/16px var(--ui); font-variant-ligatures: none; }
.status-right { display: flex; align-items: center; gap: 8px; }
.lang { background: #4a0c18; font: bold 9px/14px var(--ui); padding: 0 2px; }
```
